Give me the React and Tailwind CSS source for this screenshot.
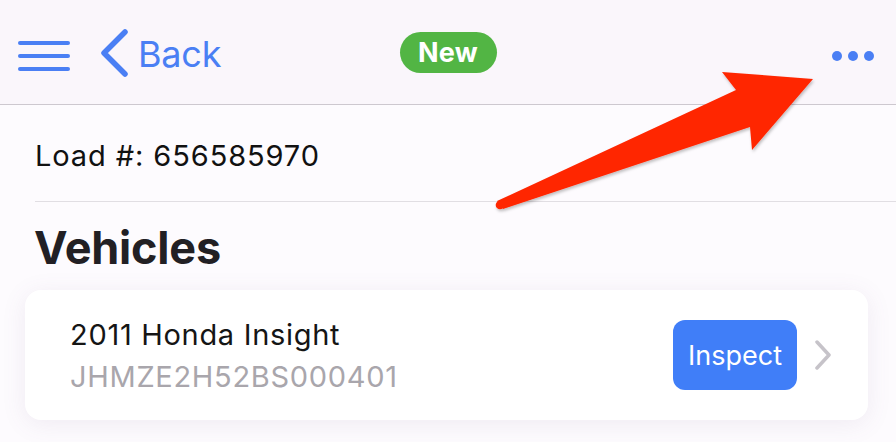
import React from "react";

export default function App() {
  return (
    <div className="relative w-[896px] h-[442px] overflow-hidden bg-[#fdfbfe]" style={{ fontFamily: "Inter, 'Noto Sans', sans-serif" }}>
      {/* Header */}
      <div className="grid grid-cols-[1fr_auto_1fr] items-center h-[105px] bg-[#faf6fb] border-b-[1.5px] border-[#cdc8cf]">
        <div className="flex items-center pl-[18px] pt-[8px]">
          <div className="flex flex-col gap-[9px] w-[52px]">
            <div className="h-[4px] rounded-full bg-[#4a7ff4]" />
            <div className="h-[4px] rounded-full bg-[#4a7ff4]" />
            <div className="h-[4px] rounded-full bg-[#4a7ff4]" />
          </div>
          <svg width="32" height="48" viewBox="0 0 32 48" className="ml-[30px] -mt-[6px]">
            <path d="M25 3 L4 24 L25 45" fill="none" stroke="#4a7ff4" strokeWidth="5.5" strokeLinecap="round" strokeLinejoin="round" />
          </svg>
          <span className="ml-[6px] -mt-[4px] text-[36px] leading-none text-[#4a7ff4] tracking-[-0.2px]">Back</span>
        </div>
        <div className="flex justify-center">
          <div className="h-[41px] w-[97px] rounded-full bg-[#52b544] flex items-center justify-center">
            <span className="text-[27px] font-bold text-white leading-none tracking-[0.3px]">New</span>
          </div>
        </div>
        <div className="flex justify-end pr-[22px] pt-[8px] gap-[6px]">
          <div className="w-[10px] h-[10px] rounded-full bg-[#4a7ff4]" />
          <div className="w-[10px] h-[10px] rounded-full bg-[#4a7ff4]" />
          <div className="w-[10px] h-[10px] rounded-full bg-[#4a7ff4]" />
        </div>
      </div>

      {/* Load row */}
      <div className="pl-[35px]">
        <div className="h-[97px] flex items-center border-b-[1.5px] border-[#e1dee3]">
          <span className="text-[29px] text-[#111] leading-none tracking-[0.9px] pt-[4px]">Load #: 656585970</span>
        </div>
      </div>

      {/* Vehicles */}
      <div className="px-[25px] pr-[28px]">
        <div className="h-[88px] flex items-center pl-[9px]">
          <h2 className="text-[45px] font-bold text-[#222024] leading-none tracking-[-0.2px] pt-[2px]">Vehicles</h2>
        </div>
        <div className="h-[130px] bg-white rounded-[16px] shadow-[0_4px_24px_rgba(120,90,140,0.10)] flex items-center pl-[45px] pr-[36px]">
          <div className="flex-1 flex flex-col gap-[13px] pt-[1px]">
            <span className="text-[29px] leading-none text-[#151515] tracking-[0.7px]">2011 Honda Insight</span>
            <span className="text-[29px] leading-none text-[#a9a6ac] tracking-[0.7px]">JHMZE2H52BS000401</span>
          </div>
          <div className="w-[124px] h-[70px] rounded-[12px] bg-[#407ef8] flex items-center justify-center">
            <span className="text-[27px] text-white leading-none">Inspect</span>
          </div>
          <svg width="18" height="30" viewBox="0 0 18 30" className="ml-[17px]">
            <path d="M3 2 L15 15 L3 28" fill="none" stroke="#c6c3c9" strokeWidth="3.5" strokeLinecap="round" strokeLinejoin="round" />
          </svg>
        </div>
      </div>

      {/* Red annotation arrow overlay */}
      <svg className="absolute left-0 top-0 pointer-events-none" width="896" height="442" viewBox="0 0 896 442">
        <defs>
          <filter id="sh" x="-10%" y="-10%" width="120%" height="120%">
            <feDropShadow dx="1" dy="2" stdDeviation="1.5" floodColor="#000" floodOpacity="0.25" />
          </filter>
        </defs>
        <g filter="url(#sh)" fill="#ff2600">
          <polygon points="497,201 736,90 722,72 813,79 752,150 750,127 503,209" />
          <circle cx="500" cy="205" r="4.3" />
        </g>
      </svg>
    </div>
  );
}
